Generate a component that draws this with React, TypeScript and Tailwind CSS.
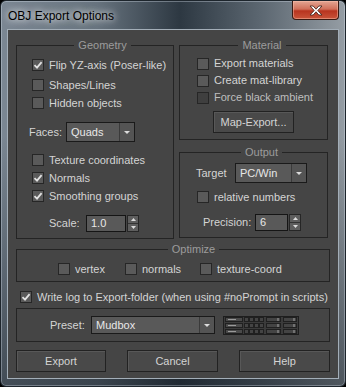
import React from "react";

type CheckProps = { on?: boolean; dim?: boolean };

const Check = ({ on, dim }: CheckProps) => (
  <span
    className={`flex h-[12px] w-[12px] shrink-0 items-center justify-center border border-[#262626] ${
      dim ? "bg-[#3f3f3f]" : "bg-[#5a5a5a]"
    }`}
  >
    {on && (
      <svg width="10" height="10" viewBox="0 0 10 10">
        <path d="M1.5 5.2 L4 7.6 L8.6 2.2" fill="none" stroke="#e2e2e2" strokeWidth="1.8" />
      </svg>
    )}
  </span>
);

const CheckRow = ({ label, on, dim }: { label: string; on?: boolean; dim?: boolean }) => (
  <div className="flex h-[18px] items-center gap-[5px]">
    <Check on={on} dim={dim} />
    <span className={dim ? "text-[#c0c0c0]" : "text-[#d4d4d4]"}>{label}</span>
  </div>
);

const Arrow = ({ up }: { up?: boolean }) => (
  <svg width="5" height="3" viewBox="0 0 5 3">
    <path d={up ? "M0 3h5L2.5 0z" : "M0 0h5L2.5 3z"} fill="#dcdcdc" />
  </svg>
);

const Combo = ({ value, cls }: { value: string; cls: string }) => (
  <div className={`flex ${cls} border border-[#1a1a1a] bg-[#595959]`}>
    <span className="flex flex-1 items-center pl-[4px] text-[#e8e8e8]">{value}</span>
    <span className="flex w-[15px] items-center justify-center border-l border-[#3a3a3a] bg-[#545454]">
      <svg width="6" height="3" viewBox="0 0 6 3">
        <path d="M0 0h6L3 3z" fill="#dcdcdc" />
      </svg>
    </span>
  </div>
);

const Spinner = ({ value, cls }: { value: string; cls: string }) => (
  <div className="flex h-[17px] gap-[1px]">
    <div className={`flex ${cls} items-center border border-[#151515] bg-[#595959] pl-[4px] text-[#e8e8e8]`}>
      {value}
    </div>
    <div className="flex w-[12px] flex-col border border-[#262626] bg-[#5e5e5e]">
      <span className="flex flex-1 items-center justify-center border-b border-[#333]">
        <Arrow up />
      </span>
      <span className="flex flex-1 items-center justify-center">
        <Arrow />
      </span>
    </div>
  </div>
);

const Legend = ({ children }: { children: React.ReactNode }) => (
  <legend className="mx-auto px-[4px] leading-[14px] text-[#9c9c9c]">{children}</legend>
);

const Btn = ({ label, cls }: { label: string; cls: string }) => (
  <button
    className={`flex items-center justify-center border border-[#222] bg-[#494949] text-[#d4d4d4] shadow-[inset_1px_1px_0_#585858] ${cls}`}
  >
    {label}
  </button>
);

const PresetIcon = () => (
  <svg width="76" height="19" viewBox="0 0 76 19">
    <rect x="0.5" y="0.5" width="75" height="18" fill="#3b3b3b" stroke="#1e1e1e" />
    {[1.5, 7.5, 13.5].map((y) => (
      <g key={y}>
        <rect x="2.5" y={y} width="17" height="4" fill="#4a4a4a" stroke="#202020" />
        <line x1="5" x2="13" y1={y + 2} y2={y + 2} stroke="#9a9a9a" />
        {[21.5, 26.5, 31.5, 36.5].map((x) => (
          <rect key={x} x={x} y={y} width="4" height="4" fill="#444" stroke="#202020" />
        ))}
        <rect x="43.5" y={y} width="14" height="4" fill="#444" stroke="#202020" />
        <line x1="55" x2="55" y1={y + 0.5} y2={y + 3.5} stroke="#a0a0a0" />
        <rect x="60.5" y={y} width="13" height="4" fill="#444" stroke="#202020" />
        <line x1="71" x2="71" y1={y + 0.5} y2={y + 3.5} stroke="#a0a0a0" />
      </g>
    ))}
  </svg>
);

export default function App() {
  return (
    <div className="h-[387px] w-[346px] bg-black font-['Liberation_Sans',Arial,sans-serif] text-[11px]">
      <div className="flex h-full w-full flex-col rounded-[6px] border border-[#1d252c] bg-[linear-gradient(180deg,rgba(0,0,0,0)_0%,rgba(0,0,0,0)_35%,rgba(20,28,36,0.55)_100%),linear-gradient(90deg,#7b8793_0%,#67737e_28%,#2d3842_52%,#5d6872_76%,#959da4_100%)] shadow-[inset_0_0_0_1px_rgba(220,230,240,0.35)]">
        {/* title bar */}
        <div className="flex h-[28px] shrink-0 items-start justify-between">
          <span className="pl-[7px] pt-[8px] text-[12px] leading-[14px] text-black [text-shadow:0_0_6px_rgba(255,255,255,0.9),0_0_10px_rgba(255,255,255,0.6)]">
            OBJ Export Options
          </span>
          <div className="mr-[6px] flex h-[19px] w-[47px] items-center justify-center rounded-b-[4px] border border-t-0 border-[#3a1a12] bg-[linear-gradient(180deg,#e3a593_0%,#d0705a_45%,#b8341f_55%,#c9543a_100%)] shadow-[inset_0_0_0_1px_rgba(255,200,180,0.45)]">
            <svg width="14" height="11" viewBox="0 0 14 11">
              <path
                d="M1 1h3.2L7 4.2 9.8 1H13L8.8 5.5 13 10H9.8L7 6.8 4.2 10H1l4.2-4.5z"
                fill="#fff"
                stroke="#4a2a22"
                strokeWidth="0.9"
              />
            </svg>
          </div>
        </div>

        {/* client area */}
        <div className="mx-[6px] flex h-[350px] flex-col border border-[#a3aeb8] bg-[#454545] pl-[8px] pt-[8px]">
          <div className="flex gap-[5px]">
            {/* Geometry */}
            <fieldset className="h-[201px] w-[158px] border border-[#242424] pl-[15px] pt-[4px]">
              <Legend>Geometry</Legend>
              <CheckRow label="Flip YZ-axis (Poser-like)" on />
              <div className="mt-[2px]">
                <CheckRow label="Shapes/Lines" />
              </div>
              <CheckRow label="Hidden objects" />
              <div className="-ml-[3px] mt-[10px] flex items-center">
                <span className="w-[37px] text-[#d4d4d4]">Faces:</span>
                <Combo value="Quads" cls="h-[20px] w-[69px]" />
              </div>
              <div className="mt-[9px]">
                <CheckRow label="Texture coordinates" />
              </div>
              <CheckRow label="Normals" on />
              <CheckRow label="Smoothing groups" on />
              <div className="ml-[17px] mt-[10px] flex items-center">
                <span className="w-[37px] text-[#d4d4d4]">Scale:</span>
                <Spinner value="1.0" cls="w-[40px]" />
              </div>
            </fieldset>

            <div className="flex w-[149px] flex-col gap-[5px]">
              {/* Material */}
              <fieldset className="h-[102px] border border-[#242424] pl-[17px] pt-[3px]">
                <Legend>Material</Legend>
                <div className="flex h-[17px] items-center gap-[5px]">
                  <Check />
                  <span className="text-[#d4d4d4]">Export materials</span>
                </div>
                <div className="flex h-[17px] items-center gap-[5px]">
                  <Check />
                  <span className="text-[#d4d4d4]">Create mat-library</span>
                </div>
                <div className="flex h-[17px] items-center gap-[5px]">
                  <Check dim />
                  <span className="text-[#bebebe]">Force black ambient</span>
                </div>
                <Btn label="Map-Export..." cls="ml-[16px] mt-[5px] h-[22px] w-[81px]" />
              </fieldset>

              {/* Output */}
              <fieldset className="h-[93px] border border-[#242424] pl-[16px] pt-[4px]">
                <Legend>Output</Legend>
                <div className="flex items-center">
                  <span className="w-[39px] text-[#d4d4d4]">Target</span>
                  <Combo value="PC/Win" cls="h-[20px] w-[72px]" />
                </div>
                <div className="ml-[1px] mt-[5px]">
                  <CheckRow label="relative numbers" />
                </div>
                <div className="ml-[7px] mt-[8px] flex items-center">
                  <span className="w-[52px] text-[#d4d4d4]">Precision:</span>
                  <Spinner value="6" cls="w-[33px]" />
                </div>
              </fieldset>
            </div>
          </div>

          {/* Optimize */}
          <fieldset className="mt-[3px] h-[40px] w-[314px] border border-[#242424] pl-[41px] pt-[4px]">
            <Legend>Optimize</Legend>
            <div className="flex">
              <div className="w-[67px]">
                <CheckRow label="vertex" />
              </div>
              <div className="w-[75px]">
                <CheckRow label="normals" />
              </div>
              <CheckRow label="texture-coord" />
            </div>
          </fieldset>

          <div className="ml-[4px] mt-[6px]">
            <CheckRow label="Write log to Export-folder (when using #noPrompt in scripts)" on />
          </div>

          {/* Preset */}
          <div className="mt-[2px] flex h-[34px] w-[314px] items-center border border-[#242424] pl-[33px]">
            <span className="w-[41px] text-[#d4d4d4]">Preset:</span>
            <Combo value="Mudbox" cls="h-[18px] w-[124px]" />
            <div className="ml-[8px] flex">
              <PresetIcon />
            </div>
          </div>

          <div className="mt-[8px] flex w-[314px] justify-between">
            <Btn label="Export" cls="h-[22px] w-[90px]" />
            <Btn label="Cancel" cls="h-[22px] w-[91px]" />
            <Btn label="Help" cls="h-[22px] w-[91px]" />
          </div>
        </div>
      </div>
    </div>
  );
}
